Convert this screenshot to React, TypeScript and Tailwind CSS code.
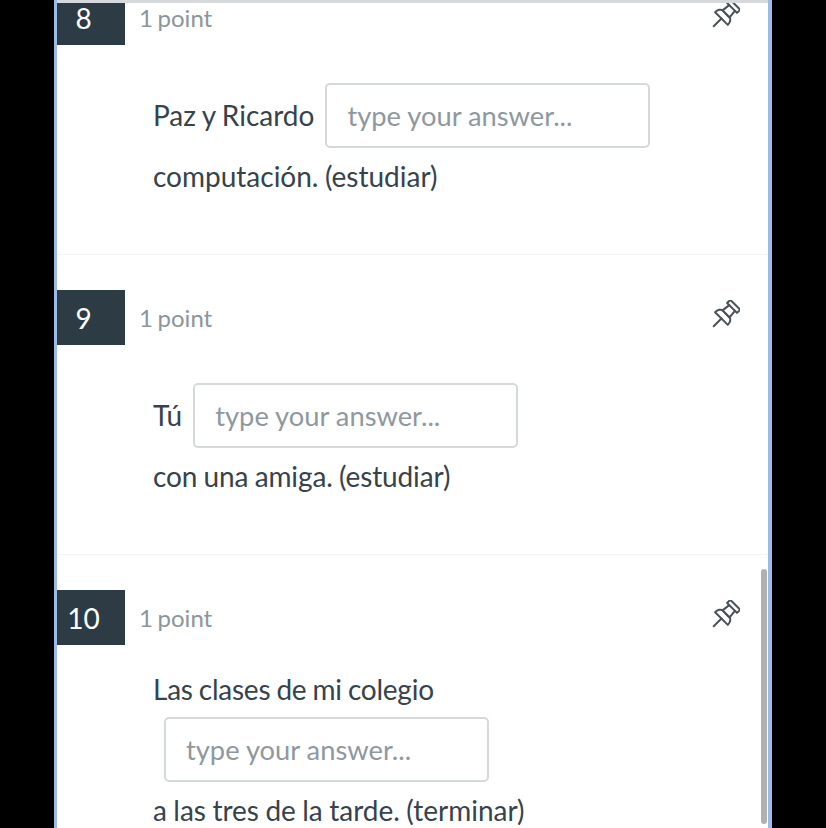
import React from "react";

const font = { fontFamily: "Lato, 'Open Sans', sans-serif" };

function PinIcon() {
  return (
    <svg width="30" height="30" viewBox="0 0 30 30" fill="none" stroke="#4a5259" strokeWidth="2" strokeLinejoin="round" strokeLinecap="round">
      <g transform="rotate(45 15 15)">
        <path d="M8 0.5h14v4.500H8z" />
        <path d="M11 5l-1 8.500h10l-1-8.500" />
        <path d="M6 20c0-3.500 2-6.500 4-6.500h10c2 0 4 3 4 6.500z" />
        <path d="M15 20v11" />
      </g>
    </svg>
  );
}

function Answer({ className = "" }: { className?: string }) {
  return (
    <input
      readOnly
      placeholder="type your answer..."
      className={`block w-[325px] h-[65px] rounded-[5px] border-2 border-[#d5d9dc] bg-white pl-[20px] text-[27.3px] text-[#2d3b45] outline-none placeholder:text-[#8f989f] ${className}`}
    />
  );
}

function Header({ num }: { num: string }) {
  return (
    <div className="flex items-center h-[55px]">
      <div className="flex h-full w-[68px] items-center justify-center bg-[#2d3b45] pr-[15px] text-[28px] text-white">{num}</div>
      <div className="ml-[14px] flex-1 text-[24px] text-[#8b959c] [word-spacing:-1.5px]">1 point</div>
      <div className="mr-[28px] -mt-[5px]"><PinIcon /></div>
    </div>
  );
}

function Line({ children, className = "" }: { children: React.ReactNode; className?: string }) {
  return <div className={`h-[34px] leading-[34px] ${className}`}>{children}</div>;
}

export default function App() {
  return (
    <div className="h-[828px] overflow-hidden bg-black" style={font}>
      <div className="relative ml-[54px] h-[828px] w-[718px] overflow-hidden border-l-[3px] border-r-[4px] border-[#9dbbe6] bg-white text-[28px] text-[#36434c] [word-spacing:-0.75px]">
        <div className="absolute inset-x-0 top-0 z-10 h-[3px] bg-[#d5d9dc]" />
        <div className="absolute right-[1px] top-[569px] z-10 h-[255px] w-[6px] rounded-full bg-[#b0b0b0]" />

        <div className="-mt-[10px]">
          <section className="h-[265px] border-b border-[#f3f3f3]">
            <Header num="8" />
            <div className="pl-[96px] pt-[28px]">
              <div className="flex items-center py-[10px]">
                <span className="mb-[2px]">Paz y Ricardo</span>
                <Answer className="ml-[11px]" />
              </div>
              <Line className="mt-[1px]">computación. (estudiar)</Line>
            </div>
          </section>

          <section className="mt-[35px] h-[265px] border-b border-[#f3f3f3]">
            <Header num="9" />
            <div className="pl-[96px] pt-[28px]">
              <div className="flex items-center py-[10px]">
                <span className="mb-[2px]">Tú</span>
                <Answer className="ml-[11px]" />
              </div>
              <Line className="mt-[1px] tracking-[-0.12px]">con una amiga. (estudiar)</Line>
            </div>
          </section>

          <section className="mt-[35px]">
            <Header num="10" />
            <div className="pl-[96px] pt-[27px]">
              <Line className="tracking-[-0.25px]">Las clases de mi colegio</Line>
              <div className="pt-[11px] pb-[10px]">
                <Answer className="ml-[11px]" />
              </div>
              <Line className="mt-[1px]">a las tres de la tarde. (terminar)</Line>
            </div>
          </section>
        </div>
      </div>
    </div>
  );
}
